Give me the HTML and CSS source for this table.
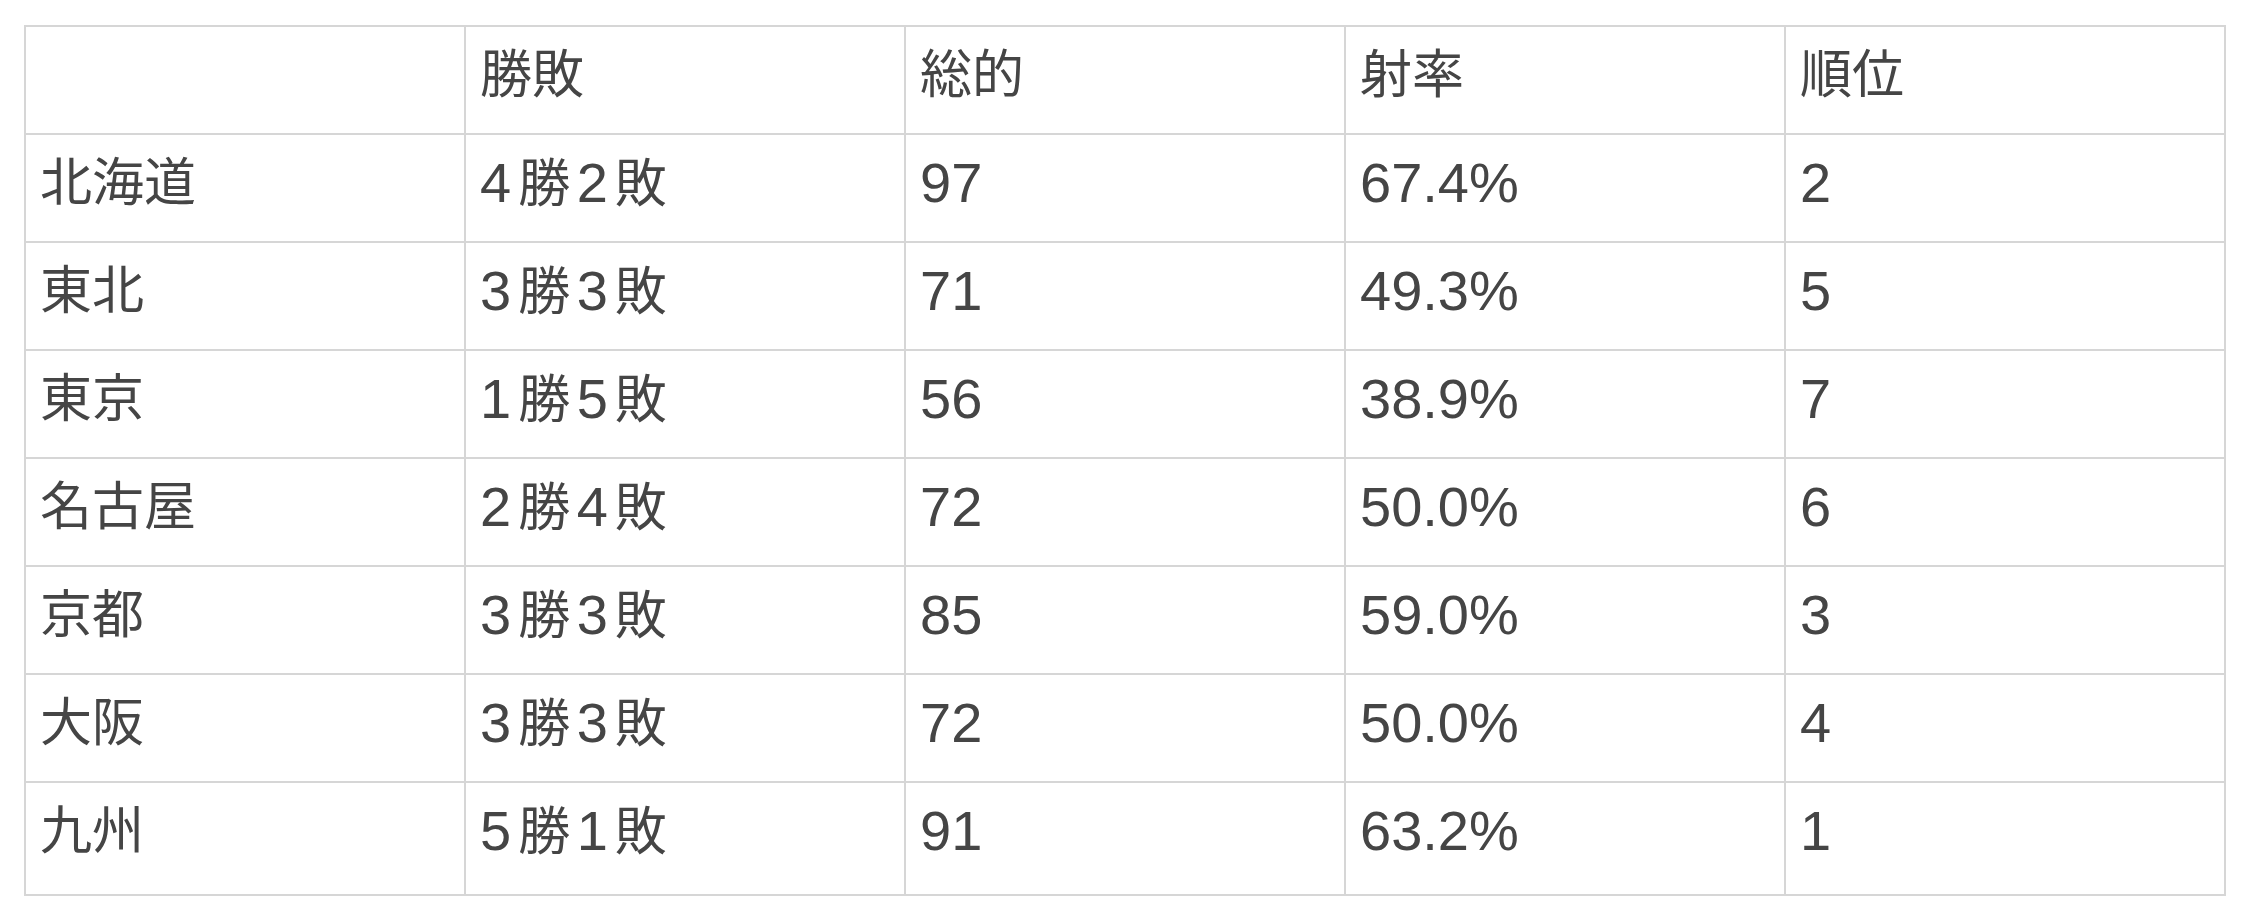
FILE: index.html
```html
<!DOCTYPE html>
<html lang="ja">
<head>
<meta charset="utf-8">
<link rel="stylesheet" href="styles.css">
</head>
<body>
<table class="stats">
  <thead>
    <tr><th></th><th>勝敗</th><th>総的</th><th>射率</th><th>順位</th></tr>
  </thead>
  <tbody>
    <tr><td>北海道</td><td><span class="n">4</span>勝<span class="n">2</span>敗</td><td class="num">97</td><td class="num">67.4%</td><td class="num">2</td></tr>
    <tr><td>東北</td><td><span class="n">3</span>勝<span class="n">3</span>敗</td><td class="num">71</td><td class="num">49.3%</td><td class="num">5</td></tr>
    <tr><td>東京</td><td><span class="n">1</span>勝<span class="n">5</span>敗</td><td class="num">56</td><td class="num">38.9%</td><td class="num">7</td></tr>
    <tr><td>名古屋</td><td><span class="n">2</span>勝<span class="n">4</span>敗</td><td class="num">72</td><td class="num">50.0%</td><td class="num">6</td></tr>
    <tr><td>京都</td><td><span class="n">3</span>勝<span class="n">3</span>敗</td><td class="num">85</td><td class="num">59.0%</td><td class="num">3</td></tr>
    <tr><td>大阪</td><td><span class="n">3</span>勝<span class="n">3</span>敗</td><td class="num">72</td><td class="num">50.0%</td><td class="num">4</td></tr>
    <tr class="last"><td>九州</td><td><span class="n">5</span>勝<span class="n">1</span>敗</td><td class="num">91</td><td class="num">63.2%</td><td class="num">1</td></tr>
  </tbody>
</table>
</body>
</html>
```

FILE: styles.css
```css
html, body {
  margin: 0;
  padding: 0;
  background: #ffffff;
}
body {
  padding: 25px 24px;
  font-family: "Liberation Sans", "Noto Sans CJK JP", sans-serif;
  color: #454545;
}
.stats {
  width: 100%;
  table-layout: fixed;
  border-collapse: collapse;
  font-size: 52px;
  text-autospace: normal;
}
.stats th,
.stats td {
  border: 2px solid #d6d6d6;
  height: 108px;
  padding: 0 14px 10px;
  text-align: left;
  vertical-align: middle;
  font-weight: normal;
  line-height: 1;
  box-sizing: border-box;
}
.stats .last td {
  height: 113px;
  padding-bottom: 15px;
}
.stats .num,
.stats .n {
  font-size: 56px;
}
```
